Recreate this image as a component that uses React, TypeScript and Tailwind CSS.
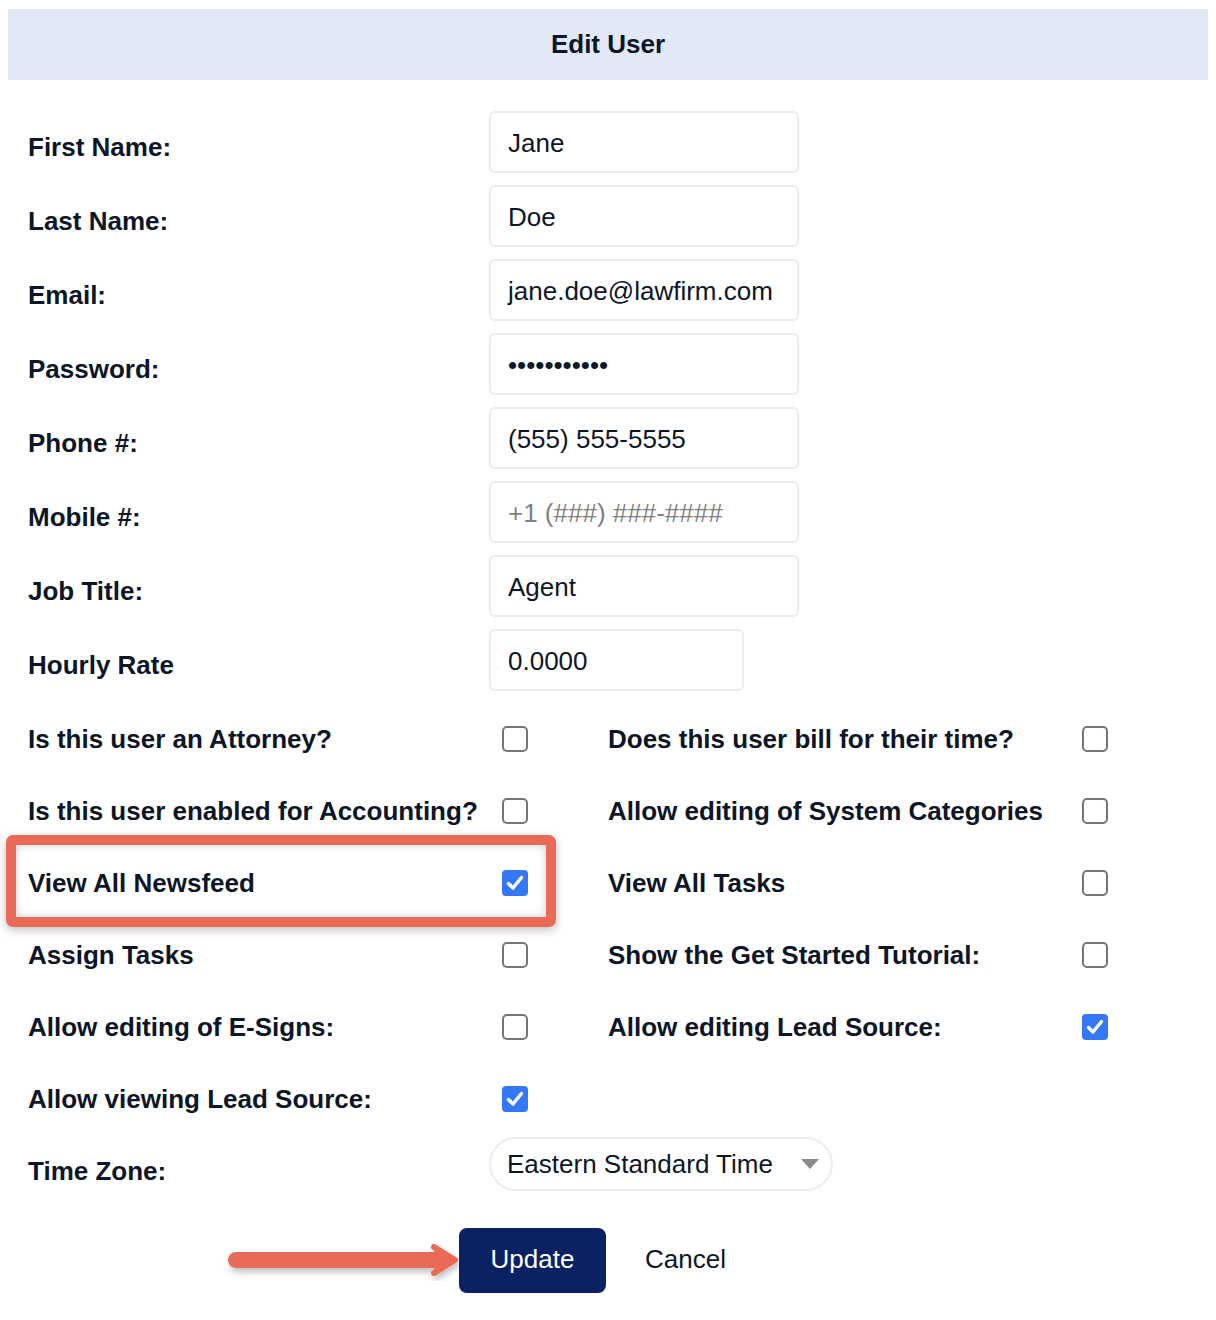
import React from "react";

type TextField = {
  label: string;
  value: string;
  placeholder?: boolean;
  narrow?: boolean;
};

const textFields: TextField[] = [
  { label: "First Name:", value: "Jane" },
  { label: "Last Name:", value: "Doe" },
  { label: "Email:", value: "jane.doe@lawfirm.com" },
  { label: "Password:", value: "•••••••••••" },
  { label: "Phone #:", value: "(555) 555-5555" },
  { label: "Mobile #:", value: "+1 (###) ###-####", placeholder: true },
  { label: "Job Title:", value: "Agent" },
  { label: "Hourly Rate", value: "0.0000", narrow: true },
];

type Flag = { label: string; checked: boolean };

// left / right pairs, right may be empty
const flagRows: [Flag, Flag | null][] = [
  [
    { label: "Is this user an Attorney?", checked: false },
    { label: "Does this user bill for their time?", checked: false },
  ],
  [
    { label: "Is this user enabled for Accounting?", checked: false },
    { label: "Allow editing of System Categories", checked: false },
  ],
  [
    { label: "View All Newsfeed", checked: true },
    { label: "View All Tasks", checked: false },
  ],
  [
    { label: "Assign Tasks", checked: false },
    { label: "Show the Get Started Tutorial:", checked: false },
  ],
  [
    { label: "Allow editing of E-Signs:", checked: false },
    { label: "Allow editing Lead Source:", checked: true },
  ],
  [{ label: "Allow viewing Lead Source:", checked: true }, null],
];

function Checkbox({ checked }: { checked: boolean }) {
  if (checked) {
    return (
      <div className="w-[26px] h-[26px] rounded-[4px] bg-[#3478f6] flex items-center justify-center">
        <svg width="20" height="20" viewBox="0 0 20 20" fill="none">
          <path
            d="M3.5 10.5 L8 15 L16.5 4.5"
            stroke="white"
            strokeWidth="3.4"
            strokeLinecap="round"
            strokeLinejoin="round"
          />
        </svg>
      </div>
    );
  }
  return <div className="w-[26px] h-[26px] rounded-[5px] border-2 border-[#767676] bg-white" />;
}

export default function App() {
  return (
    <div className="bg-white w-[1216px] h-[1320px] pt-[9px] px-[8px] text-[#0d1628] font-['Liberation_Sans',Helvetica,Arial,sans-serif]">
      <div className="h-[71px] bg-[#e2e9f6] flex items-center justify-center">
        <h1 className="text-[26px] font-bold">Edit User</h1>
      </div>

      <div className="pl-[20px] pt-[25px]">
        {textFields.map((f) => (
          <div key={f.label} className="flex items-center h-[74px]">
            <div className="w-[461px] text-[26px] font-bold mt-[10px]">{f.label}</div>
            <div
              className={`h-[62px] border-2 border-[#ececec] rounded-[6px] flex items-center pl-[17px] pt-[2px] text-[26px] ${
                f.narrow ? "w-[255px]" : "w-[310px]"
              } ${f.placeholder ? "text-[#808080]" : "text-[#0d1628]"}`}
            >
              {f.value}
            </div>
          </div>
        ))}

        <div className="mt-[6px]">
          {flagRows.map(([left, right]) => (
            <div key={left.label} className="flex items-center h-[72px]">
              <div className="relative flex items-center w-[580px]">
                <div className="w-[474px] text-[26px] font-bold">{left.label}</div>
                <Checkbox checked={left.checked} />
                {left.label === "View All Newsfeed" && (
                  <div className="absolute left-[-22px] top-[-29px] w-[550px] h-[92px] border-[10px] border-[#ea6a58] rounded-[7px] shadow-[0_3px_10px_rgba(0,0,0,0.25),inset_0_0_8px_rgba(0,0,0,0.2)]" />
                )}
              </div>
              {right && (
                <div className="flex items-center">
                  <div className="w-[474px] text-[26px] font-bold">{right.label}</div>
                  <Checkbox checked={right.checked} />
                </div>
              )}
            </div>
          ))}
        </div>

        <div className="flex items-start h-[55px]">
          <div className="w-[461px] text-[26px] font-bold mt-[17px]">Time Zone:</div>
          <div className="mt-[2px] w-[344px] h-[54px] border-2 border-[#ececec] rounded-full flex items-center justify-between pl-[16px] pr-[12px] text-[26px]">
            <span>Eastern Standard Time</span>
            <svg width="18" height="10" viewBox="0 0 18 10">
              <path d="M0 0 H18 L9 10 Z" fill="#8a8a8a" />
            </svg>
          </div>
        </div>

        <div className="flex items-center mt-[38px]">
          <svg width="240" height="40" viewBox="0 0 240 40" className="ml-[194px] mr-[-3px]">
            <defs>
              <filter id="sh" x="-10%" y="-50%" width="120%" height="200%">
                <feDropShadow dx="2" dy="4" stdDeviation="3" floodColor="#000" floodOpacity="0.25" />
              </filter>
            </defs>
            <g filter="url(#sh)">
              <line x1="14" y1="19" x2="222" y2="19" stroke="#ea6a58" strokeWidth="16" strokeLinecap="round" />
              <path
                d="M212 6 L233 19 L212 32"
                fill="#ea6a58"
                stroke="#ea6a58"
                strokeWidth="6"
                strokeLinejoin="round"
                strokeLinecap="round"
              />
            </g>
          </svg>
          <button className="w-[147px] h-[65px] bg-[#0b2163] rounded-[8px] text-white text-[26px] pb-[2px]">
            Update
          </button>
          <button className="ml-[39px] text-[26px] text-[#0d1628] pb-[2px]">Cancel</button>
        </div>
      </div>
    </div>
  );
}
